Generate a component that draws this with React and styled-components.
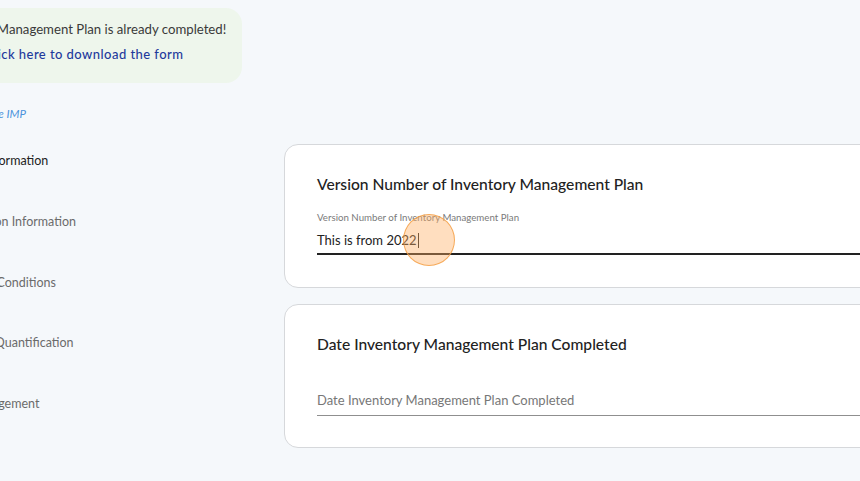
import React from "react";
import styled, { createGlobalStyle } from "styled-components";

const Global = createGlobalStyle`
  html, body { margin: 0; padding: 0; background: #f5f8fb; overflow: hidden; }
  body { font-family: Lato, "Open Sans", Arial, sans-serif; }
`;

const Page = styled.div`
  display: flex;
  margin-left: -62px;
  width: 1100px;
  height: 481px;
`;

const Sidebar = styled.aside`
  width: 346px;
  flex: none;
  display: flex;
  flex-direction: column;
`;

const Banner = styled.div`
  margin: 8px 0 0 31px;
  width: 273px;
  height: 75px;
  box-sizing: border-box;
  padding: 13px 16px 0 16px;
  background: #eef6ec;
  border-radius: 16px;
  display: flex;
  flex-direction: column;
  gap: 8px;
`;

const BannerText = styled.div`
  font-size: 13.2px;
  line-height: 17px;
  color: #3a3a3a;
  white-space: nowrap;
`;

const BannerLink = styled.a`
  font-size: 13px;
  line-height: 17px;
  color: #1f3a9c;
  font-weight: 500;
  letter-spacing: 0.45px;
  white-space: nowrap;
  text-decoration: none;
`;

const Guide = styled.a`
  margin: 24px 0 0 -7px;
  font-size: 11.5px;
  line-height: 13px;
  font-style: italic;
  color: #4a93dc;
  text-decoration: none;
  white-space: nowrap;
`;

const Nav = styled.nav`
  margin-top: 33px;
  display: flex;
  flex-direction: column;
`;

const NavItem = styled.div`
  height: 60.75px;
  font-size: 12.5px;
  line-height: 16px;
  color: ${(p) => (p.$active ? "#222" : "#6b6b6b")};
  white-space: nowrap;
`;

const Main = styled.main`
  flex: 1;
  padding-top: 144px;
  display: flex;
  flex-direction: column;
  gap: 16px;
`;

const Card = styled.section`
  position: relative;
  width: 640px;
  height: 144px;
  box-sizing: border-box;
  padding: 30px 32px 0 32px;
  background: #fff;
  border: 1px solid #d6d8db;
  border-radius: 14px;
`;

const Title = styled.h2`
  margin: 0;
  font-size: 15.6px;
  line-height: 18px;
  font-weight: 500;
  color: #222;
  white-space: nowrap;
`;

const Field = styled.div`
  margin-top: ${(p) => (p.$filled ? "18px" : "30px")};
  display: flex;
  flex-direction: column;
  border-bottom: ${(p) => (p.$filled ? "2px solid #222" : "1px solid #8f8f8f")};
`;

const Label = styled.label`
  font-size: 9.7px;
  line-height: 12px;
  color: #7a7a7a;
  white-space: nowrap;
`;

const Value = styled.div`
  display: flex;
  align-items: center;
  box-sizing: border-box;
  height: ${(p) => (p.$placeholder ? "32px" : "30px")};
  padding-top: ${(p) => (p.$placeholder ? "2px" : "4px")};
  font-size: 13px;
  color: ${(p) => (p.$placeholder ? "#777" : "#222")};
  white-space: nowrap;
`;

const Caret = styled.span`
  display: inline-block;
  width: 1px;
  height: 15px;
  background: #222;
  margin-left: 1px;
`;

const Click = styled.div`
  position: absolute;
  left: 118px;
  top: 69px;
  width: 50px;
  height: 50px;
  border-radius: 50%;
  background: rgba(255, 172, 95, 0.4);
  border: 1.5px solid rgba(245, 160, 70, 0.85);
  pointer-events: none;
`;

export default function App() {
  return (
    <>
      <Global />
      <Page>
        <Sidebar>
          <Banner>
            <BannerText>A Management Plan is already completed!</BannerText>
            <BannerLink href="#">Click here to download the form</BannerLink>
          </Banner>
          <Guide href="#">Read about the IMP</Guide>
          <Nav>
            <NavItem $active>General Information</NavItem>
            <NavItem>Organization Information</NavItem>
            <NavItem>Operating Conditions</NavItem>
            <NavItem>Emissions Quantification</NavItem>
            <NavItem>Data Management</NavItem>
          </Nav>
        </Sidebar>
        <Main>
          <Card>
            <Title>Version Number of Inventory Management Plan</Title>
            <Field $filled>
              <Label>Version Number of Inventory Management Plan</Label>
              <Value>
                This is from 2022
                <Caret />
              </Value>
            </Field>
            <Click />
          </Card>
          <Card>
            <Title>Date Inventory Management Plan Completed</Title>
            <Field>
              <Value $placeholder>Date Inventory Management Plan Completed</Value>
            </Field>
          </Card>
        </Main>
      </Page>
    </>
  );
}
